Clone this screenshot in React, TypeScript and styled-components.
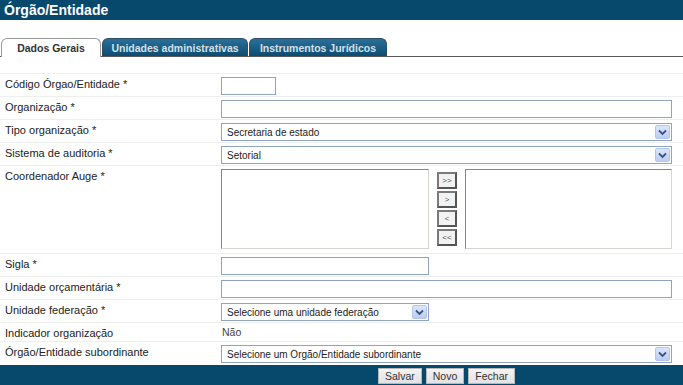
import { ReactElement } from "react"
import styled, { createGlobalStyle } from "styled-components"

const GlobalStyle = createGlobalStyle`
  html, body {
    margin: 0;
    padding: 0;
    background: #ffffff;
  }
  body {
    font-family: "Liberation Sans", Arial, sans-serif;
    font-size: 11px;
    color: #333333;
  }
`

const Page = styled.div`
  display: flex;
  flex-direction: column;
  width: 683px;
  height: 385px;
  overflow: hidden;
`

const TitleBar = styled.div`
  display: flex;
  align-items: center;
  height: 20px;
  padding-left: 4px;
  background: #07486d;
`

const Title = styled.h1`
  margin: 0;
  font-size: 14px;
  font-weight: bold;
  color: #ffffff;
`

const TabBar = styled.div`
  display: flex;
  align-items: flex-end;
  gap: 1px;
  margin-top: 18px;
  padding-left: 1px;
  height: 18px;
  border-bottom: 1px solid #5a5a5a;
`

interface TabProps {
  active?: boolean
  width: number
}

const Tab = styled.div<TabProps>`
  display: flex;
  align-items: center;
  justify-content: center;
  box-sizing: border-box;
  width: ${({ width }) => width}px;
  height: ${({ active }) => (active ? 19 : 18)}px;
  margin-bottom: ${({ active }) => (active ? -1 : 0)}px;
  border: 1px solid ${({ active }) => (active ? "#9a9a9a" : "#2c4f66")};
  border-bottom: none;
  border-radius: 6px 6px 0 0;
  background: ${({ active }) =>
    active ? "#ffffff" : "linear-gradient(#2a7099, #0d4c72)"};
  color: ${({ active }) => (active ? "#333333" : "#d3e1ec")};
  font-size: 10.5px;
  font-weight: bold;
`

const Form = styled.div`
  display: flex;
  flex-direction: column;
  margin-top: 16px;
`

interface RowProps {
  extra?: number
}

const Row = styled.div<RowProps>`
  display: grid;
  grid-template-columns: 216px 1fr;
  align-items: start;
  padding: 3px 11px ${({ extra }) => 1 + (extra ?? 0)}px 5px;
  border-top: 1px solid #eeeeee;
`

const Label = styled.label`
  padding-top: 1px;
  line-height: 13px;
  font-size: 11px;
  color: #222222;
`

const StaticValue = styled.span`
  padding-left: 1px;
  line-height: 13px;
  font-size: 10.5px;
  color: #444444;
`

interface SizedProps {
  w?: number
}

const TextInput = styled.input<SizedProps>`
  box-sizing: border-box;
  width: ${({ w }) => (w ? `${w}px` : "100%")};
  height: 18px;
  margin: 0;
  padding: 0 4px;
  border: 1px solid #8ea4bf;
  background: #ffffff;
  font-family: "Liberation Sans", Arial, sans-serif;
  font-size: 10px;
  outline: none;
`

const SelectBox = styled.div<SizedProps>`
  display: flex;
  align-items: center;
  box-sizing: border-box;
  width: ${({ w }) => (w ? `${w}px` : "100%")};
  height: 18px;
  padding: 1px;
  border: 1px solid #8ea4bf;
  background: #ffffff;
`

const SelectText = styled.span`
  flex: 1;
  padding-left: 4px;
  font-size: 10px;
  color: #222222;
  white-space: nowrap;
  overflow: hidden;
`

const ArrowBox = styled.span`
  display: flex;
  align-items: center;
  justify-content: center;
  box-sizing: border-box;
  width: 15px;
  height: 14px;
  border: 1px solid #b3c6ea;
  border-radius: 2px;
  background: linear-gradient(#dbe6fb, #bccdf1);
`

const Picker = styled.div`
  display: grid;
  grid-template-columns: 208px 20px 1fr;
  column-gap: 8px;
  align-items: center;
`

const ListBox = styled.div`
  box-sizing: border-box;
  height: 80px;
  border: 1px solid;
  border-color: #8a8580 #d8d4cf #d8d4cf #8a8580;
  background: #ffffff;
`

const MoveButtons = styled.div`
  display: flex;
  flex-direction: column;
  gap: 2px;
`

const MoveButton = styled.button`
  box-sizing: border-box;
  width: 20px;
  height: 17px;
  margin: 0;
  padding: 0;
  border: 2px solid;
  border-color: #7a7a7a #555555 #555555 #7a7a7a;
  background: #f2f2f2;
  font-family: "Liberation Sans", Arial, sans-serif;
  font-size: 8px;
  color: #555555;
`

const Footer = styled.div`
  display: grid;
  grid-template-columns: 216px 1fr;
  margin-top: 1px;
  padding: 3px 11px 0 5px;
  flex: 1;
  background: #07486d;
`

const FooterButtons = styled.div`
  grid-column: 2;
  display: flex;
  justify-content: center;
  gap: 4px;
`

const FooterButton = styled.button`
  height: 16px;
  margin: 0;
  padding: 0 6px;
  border: 1px solid #b8b8b8;
  background: linear-gradient(#f4f4f4, #e2e2e2);
  font-family: "Liberation Sans", Arial, sans-serif;
  font-size: 10.5px;
  color: #333333;
`

function Chevron(): ReactElement {
  return (
    <svg width="9" height="7" viewBox="0 0 9 7">
      <path
        d="M1 1.5 L4.5 5 L8 1.5"
        fill="none"
        stroke="#3c5186"
        strokeWidth="1.8"
      />
    </svg>
  )
}

function Select({ value, w }: { value: string; w?: number }): ReactElement {
  return (
    <SelectBox w={w}>
      <SelectText>{value}</SelectText>
      <ArrowBox>
        <Chevron />
      </ArrowBox>
    </SelectBox>
  )
}

export default function App(): ReactElement {
  return (
    <Page>
      <GlobalStyle />
      <TitleBar>
        <Title>Órgão/Entidade</Title>
      </TitleBar>
      <TabBar>
        <Tab active width={100}>
          Dados Gerais
        </Tab>
        <Tab width={146}>Unidades administrativas</Tab>
        <Tab width={138}>Instrumentos Jurídicos</Tab>
      </TabBar>
      <Form>
        <Row>
          <Label>Código Órgao/Entidade *</Label>
          <TextInput w={55} />
        </Row>
        <Row>
          <Label>Organização *</Label>
          <TextInput />
        </Row>
        <Row>
          <Label>Tipo organização *</Label>
          <Select value="Secretaria de estado" />
        </Row>
        <Row>
          <Label>Sistema de auditoria *</Label>
          <Select value="Setorial" />
        </Row>
        <Row extra={3}>
          <Label>Coordenador Auge *</Label>
          <Picker>
            <ListBox />
            <MoveButtons>
              <MoveButton>&gt;&gt;</MoveButton>
              <MoveButton>&gt;</MoveButton>
              <MoveButton>&lt;</MoveButton>
              <MoveButton>&lt;&lt;</MoveButton>
            </MoveButtons>
            <ListBox />
          </Picker>
        </Row>
        <Row>
          <Label>Sigla *</Label>
          <TextInput w={208} />
        </Row>
        <Row>
          <Label>Unidade orçamentária *</Label>
          <TextInput />
        </Row>
        <Row>
          <Label>Unidade federação *</Label>
          <Select value="Selecione uma unidade federação" w={208} />
        </Row>
        <Row>
          <Label>Indicador organização</Label>
          <StaticValue>Não</StaticValue>
        </Row>
        <Row>
          <Label>Órgão/Entidade subordinante</Label>
          <Select value="Selecione um Órgão/Entidade subordinante" />
        </Row>
      </Form>
      <Footer>
        <FooterButtons>
          <FooterButton>Salvar</FooterButton>
          <FooterButton>Novo</FooterButton>
          <FooterButton>Fechar</FooterButton>
        </FooterButtons>
      </Footer>
    </Page>
  )
}
